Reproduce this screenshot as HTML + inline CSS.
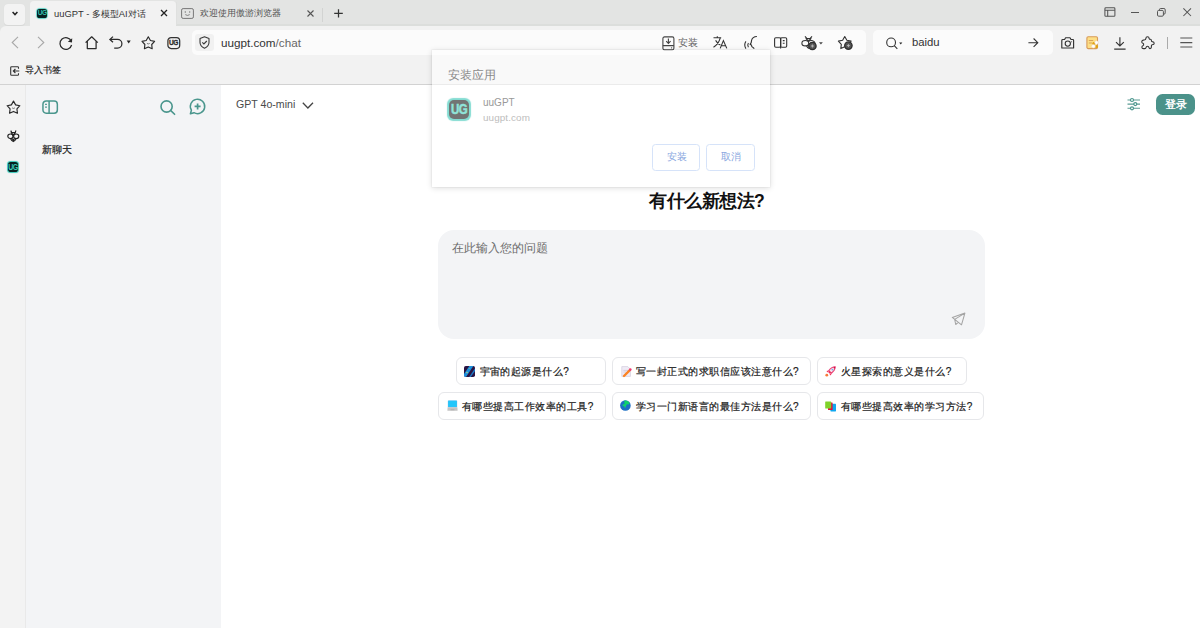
<!DOCTYPE html>
<html><head><meta charset="utf-8">
<style>
*{box-sizing:border-box;margin:0;padding:0}
html,body{width:1200px;height:628px;overflow:hidden;background:#fff;font-family:"Liberation Sans",sans-serif;color:#222}
.a{position:absolute}
svg{position:absolute;overflow:visible}
#tabs{left:0;top:0;width:1200px;height:40px;background:#e3e4e3}
#tool{left:0;top:26px;width:1200px;height:58px;background:#f2f2f2;border-radius:6px 0 0 0}
#bmline{left:0;top:84px;width:1200px;height:1px;background:#d2d2d2}
#strip{left:0;top:85px;width:26px;height:543px;background:#f3f3f3;border-right:1px solid #e9e9e9}
#side{left:26px;top:85px;width:195px;height:543px;background:#f3f4f6}
.t{white-space:nowrap;line-height:1}
.chip{position:absolute;height:28px;border:1px solid #e6e7ea;border-radius:6px;background:#fff;font-size:10px;letter-spacing:0.47px;color:#1a1a1a;-webkit-text-stroke:0.2px #1a1a1a;white-space:nowrap;line-height:27px;padding-left:23px}
.chip i{position:absolute;left:8px;top:8.5px;width:11px;height:11px;border-radius:2px}
</style></head><body>
<!-- tab strip -->
<div id="tabs" class="a"></div>
<div class="a" style="left:4px;top:3.5px;width:21px;height:21px;background:#f3f3f3;border-radius:4px;box-shadow:0 0.5px 1px rgba(0,0,0,0.06)"></div>
<svg style="left:12px;top:11px" width="6" height="5" viewBox="0 0 6 5"><path d="M0.6 1 L3 3.6 L5.4 1" fill="none" stroke="#222" stroke-width="1.5"/></svg>
<div class="a" style="left:30px;top:1px;width:146px;height:26px;background:#f2f2f2;border-radius:4px 4px 0 0"></div>
<!-- UG favicon -->
<div class="a" style="left:37.2px;top:8.7px;width:9.8px;height:9.8px;border-radius:2.6px;background:#08201f;box-shadow:0 0 0.8px 0.7px #3ccbbb"></div>
<div class="a t" style="left:37.2px;top:10.2px;width:9.8px;font-size:6.6px;font-weight:bold;color:#35c2b2;text-align:center;letter-spacing:-0.6px;transform:scaleY(1.15)">UG</div>
<div class="a t" style="left:54px;top:8.5px;font-size:9.4px;color:#333">uuGPT - 多模型AI对话</div>
<svg style="left:160px;top:9px" width="8" height="8" viewBox="0 0 8 8"><path d="M1 1L7 7M7 1L1 7" stroke="#222" stroke-width="1.3"/></svg>
<!-- tab2 -->
<svg style="left:181px;top:7.5px" width="13" height="11" viewBox="0 0 13 11"><rect x="0.6" y="0.6" width="11.8" height="9.8" rx="1.5" fill="none" stroke="#777" stroke-width="1"/><circle cx="4.3" cy="4" r="0.7" fill="#777"/><circle cx="8.7" cy="4" r="0.7" fill="#777"/><path d="M4.3 6.6 Q6.5 8.3 8.7 6.6" fill="none" stroke="#777" stroke-width="0.9"/></svg>
<div class="a t" style="left:200px;top:8.5px;font-size:9px;color:#555">欢迎使用傲游浏览器</div>
<svg style="left:307px;top:9.5px" width="7" height="7" viewBox="0 0 7 7"><path d="M0.5 0.5L6.5 6.5M6.5 0.5L0.5 6.5" stroke="#555" stroke-width="1.1"/></svg>
<div class="a" style="left:322px;top:7.5px;width:1px;height:14px;background:#d2d3d2"></div>
<svg style="left:333.5px;top:8.5px" width="9" height="9" viewBox="0 0 9 9"><path d="M4.5 0.2V8.6M0.2 4.4H8.8" stroke="#333" stroke-width="1.25"/></svg>
<!-- window controls -->
<svg style="left:1103.5px;top:6.5px" width="12" height="10" viewBox="0 0 12 10"><rect x="0.9" y="0.8" width="10" height="8.5" rx="0.9" fill="none" stroke="#555" stroke-width="1.05"/><path d="M0.9 3.3H10.9M3.7 3.3V9.3" stroke="#555" stroke-width="1.05"/></svg>
<div class="a" style="left:1131px;top:12px;width:8px;height:1.2px;background:#555"></div>
<svg style="left:1156.5px;top:7.8px" width="9" height="9" viewBox="0 0 9 9"><rect x="0.5" y="2.4" width="5.9" height="5.8" rx="1.2" fill="none" stroke="#555" stroke-width="1"/><path d="M2.4 2.4V1.8Q2.4 0.5 3.7 0.5H6.9Q8.2 0.5 8.2 1.8V4.9Q8.2 6.2 6.9 6.2H6.4" fill="none" stroke="#555" stroke-width="1"/></svg>
<svg style="left:1183px;top:8px" width="9" height="9" viewBox="0 0 9 9"><path d="M0.4 0.4L8 8M8 0.4L0.4 8" stroke="#555" stroke-width="1.05"/></svg>

<div class="a" style="left:176px;top:24px;width:1024px;height:1.5px;background:#dcdedc"></div>
<div class="a" style="left:176px;top:2px;width:1px;height:23px;background:#dfe0df"></div>
<!-- toolbar -->
<div id="tool" class="a"></div>
<div id="bmline" class="a"></div>

<!-- toolbar icons -->
<svg style="left:11px;top:36px" width="8" height="13" viewBox="0 0 8 13"><path d="M7 0.8L1.2 6.5L7 12.2" fill="none" stroke="#a8a8a8" stroke-width="1.1"/></svg>
<svg style="left:36.5px;top:36px" width="8" height="13" viewBox="0 0 8 13"><path d="M1 0.8L6.8 6.5L1 12.2" fill="none" stroke="#a8a8a8" stroke-width="1.1"/></svg>
<svg style="left:59px;top:35.5px" width="14" height="14" viewBox="0 0 14 14"><path d="M12.3 5.2A5.9 5.9 0 1 0 12.6 9" fill="none" stroke="#2a2a2a" stroke-width="1.25"/><path d="M13.2 2.2L13 6.6L8.8 5.8Z" fill="#2a2a2a"/></svg>
<svg style="left:85px;top:36px" width="14" height="14" viewBox="0 0 14 14"><path d="M0.6 6.6L6.7 0.8L12.8 6.6M2.3 5.1V12.5H11.1V5.1" fill="none" stroke="#2a2a2a" stroke-width="1.25" stroke-linejoin="round"/></svg>
<svg style="left:109px;top:36px" width="23" height="13" viewBox="0 0 23 13"><path d="M4 0.6L0.9 3.4L4 6.2M1 3.4H8.5A4.4 4.4 0 0 1 8.5 12.2H5.2" fill="none" stroke="#2a2a2a" stroke-width="1.25"/><path d="M17.7 4.6H21.7L19.7 7.4Z" fill="#222"/></svg>
<svg style="left:140.5px;top:36px" width="15" height="14" viewBox="0 0 15 14"><path d="M7.30 0.80 L9.42 4.49 L13.58 5.36 L10.72 8.51 L11.18 12.74 L7.30 11.00 L3.42 12.74 L3.88 8.51 L1.02 5.36 L5.18 4.49Z" fill="none" stroke="#2a2a2a" stroke-width="1.15" stroke-linejoin="round"/><path d="M5.9 7.4Q7.3 8.5 8.7 7.4" fill="none" stroke="#555" stroke-width="0.8"/></svg>
<svg style="left:166.5px;top:36.5px" width="14" height="12" viewBox="0 0 14 12"><rect x="0.9" y="0.6" width="11.8" height="10.9" rx="3.2" fill="none" stroke="#333" stroke-width="1.25"/></svg>
<div class="a t" style="left:167.5px;top:40.3px;width:12px;text-align:center;font-size:6.6px;font-weight:bold;color:#2a2a2a;-webkit-text-stroke:0.25px #2a2a2a;letter-spacing:-0.5px;transform:scaleY(1.15)">UG</div>
<!-- address bar -->
<div class="a" style="left:192px;top:30px;width:674px;height:25px;background:#fbfbfb;border-radius:5px"></div>
<div class="a" style="left:195px;top:34px;width:19px;height:17px;background:#f1f1f1;border-radius:3px"></div>
<svg style="left:199px;top:36px" width="11" height="13" viewBox="0 0 11 13"><path d="M5.5 0.7L10 2.5V6.3Q10 10.3 5.5 12.3Q1 10.3 1 6.3V2.5Z" fill="none" stroke="#3a3a3a" stroke-width="1.1" stroke-linejoin="round"/><path d="M3.3 6.4L4.9 8L7.8 5" fill="none" stroke="#3a3a3a" stroke-width="1.1"/></svg>
<div class="a t" style="left:221px;top:37px;font-size:11.7px;color:#333">uugpt.com<span style="color:#666">/chat</span></div>
<svg style="left:661.5px;top:35.5px" width="13" height="15" viewBox="0 0 13 15"><rect x="0.9" y="0.9" width="11" height="13" rx="1.6" fill="none" stroke="#444" stroke-width="1.1"/><path d="M0.9 9.6H11.9M6.4 2.6V7.3M4.2 5.2L6.4 7.4L8.6 5.2" fill="none" stroke="#444" stroke-width="1.1"/><circle cx="9.6" cy="11.8" r="0.6" fill="#444"/></svg>
<div class="a t" style="left:678px;top:38px;font-size:9.8px;color:#666">安装</div>
<svg style="left:713px;top:36px" width="15" height="13" viewBox="0 0 15 13"><path d="M0.5 1.8H8.2M4.3 0.3V1.8M7.3 1.8Q5.5 8 0.5 11.2M2.6 4.4Q4.6 7.8 7.4 9M7.2 12.4L10.4 4.6L13.8 12.4M8.4 9.7H12.6" fill="none" stroke="#333" stroke-width="1.1"/></svg>
<svg style="left:740px;top:33px" width="52" height="19" viewBox="0 0 52 19"><g fill="none" stroke="#333" stroke-width="1.1" stroke-linejoin="round"><path d="M16.9 3.5Q12.4 3.5 11.5 7.6L11.2 9.6L10.1 11.4L11.5 12.1Q11.4 14.3 13 14.5L14.3 15.6"/><path d="M5.9 8.4Q3.6 11.9 5.9 15.6M8.4 10Q7.1 12 8.4 14.2"/><rect x="34.6" y="4.8" width="6" height="9.5" rx="1.2"/><rect x="40.6" y="4.8" width="6.1" height="9.5" rx="1.2"/><path d="M40.6 4.8V15.6M42.8 7.6H44.6M42.8 10.2H44.6"/></g></svg>
<svg style="left:796px;top:33px" width="60" height="19" viewBox="0 0 60 19"><path d="M9 3.3L11 5.6M16 3.3L14 5.6M10 5.6H15L12.5 8.4Z" fill="none" stroke="#333" stroke-width="1.1" stroke-linejoin="round"/><ellipse cx="9.3" cy="10.2" rx="3.4" ry="2.7" fill="none" stroke="#333" stroke-width="1.1"/><path d="M12.6 8.2Q15.5 6.6 18.2 8.6Q19.4 9.8 18.8 11" fill="none" stroke="#333" stroke-width="1.1"/><path d="M10.5 12.8Q11.5 15 13 15.5" fill="none" stroke="#333" stroke-width="1.1"/><circle cx="16.4" cy="13" r="3.7" fill="#555" stroke="#2e2e2e" stroke-width="1.3"/><path d="M14.9 13H17.9M16.4 11.5V14.5" stroke="#bbb" stroke-width="0.9"/><path d="M23 9.2H26.8L24.9 11.6Z" fill="#444"/>
<path d="M48.75 3.50 L50.87 7.29 L55.12 8.13 L52.17 11.31 L52.69 15.62 L48.75 13.80 L44.81 15.62 L45.33 11.31 L42.38 8.13 L46.63 7.29Z" fill="none" stroke="#333" stroke-width="1.1" stroke-linejoin="round"/><circle cx="52.4" cy="12.6" r="3.7" fill="#555" stroke="#2e2e2e" stroke-width="1.3"/><path d="M50.9 12.6H53.9M52.4 11.1V14.1" stroke="#bbb" stroke-width="0.9"/></svg>
<!-- search box -->
<div class="a" style="left:873px;top:30px;width:180px;height:25px;background:#fbfbfb;border-radius:5px"></div>
<svg style="left:885.5px;top:37px" width="17" height="13" viewBox="0 0 17 13"><circle cx="5.1" cy="5.4" r="4.4" fill="none" stroke="#333" stroke-width="1.1"/><path d="M8.3 8.6L11.3 11.8" stroke="#333" stroke-width="1.1"/><path d="M13.2 5.5H16.3L14.75 7.5Z" fill="#222"/></svg>
<div class="a t" style="left:912px;top:37px;font-size:11.3px;color:#333">baidu</div>
<svg style="left:1028px;top:38px" width="11" height="10" viewBox="0 0 11 10"><path d="M0.4 4.7H9.8M5.6 0.5L9.8 4.7L5.6 8.9" fill="none" stroke="#333" stroke-width="1.1"/></svg>
<svg style="left:1060.5px;top:36.5px" width="14" height="12" viewBox="0 0 14 12"><path d="M0.8 3.4Q0.8 2.5 1.8 2.5H3.6L4.6 0.7H9L10 2.5H11.8Q12.6 2.5 12.6 3.4V11H0.8Z" fill="none" stroke="#333" stroke-width="1.15" stroke-linejoin="round"/><circle cx="6.8" cy="6.6" r="2.6" fill="none" stroke="#333" stroke-width="1.1"/><circle cx="10.6" cy="4.8" r="0.5" fill="#333"/></svg>
<svg style="left:1086px;top:36px" width="14" height="14" viewBox="0 0 14 14"><rect x="0.9" y="0.8" width="10.6" height="11.8" rx="1.3" fill="#fddf86" stroke="#d79a5a" stroke-width="1.1"/><path d="M2.8 4.5H7.2M2.8 7H6.2" stroke="#d9a35a" stroke-width="1"/><circle cx="7.8" cy="7.6" r="1.5" fill="#e0a010"/><circle cx="10.5" cy="10.4" r="1.5" fill="#e0a010"/><circle cx="10.5" cy="6.6" r="1.8" fill="#fff" stroke="#e8d0c0" stroke-width="0.5"/><circle cx="7.4" cy="10.2" r="1.8" fill="#fff" stroke="#e8d0c0" stroke-width="0.5"/></svg>
<svg style="left:1113.5px;top:36.5px" width="12" height="13" viewBox="0 0 12 13"><path d="M5.9 0.2V9M2 5.2L5.9 9L9.8 5.2M0.2 12.1H11.6" fill="none" stroke="#333" stroke-width="1.15"/></svg>
<svg style="left:1140.5px;top:36px" width="14" height="14" viewBox="0 0 14 14"><path d="M4.8 2.6Q5 0.7 6.5 0.7Q8 0.7 8.2 2.6Q8.3 3.3 9.4 3.3Q10.4 3.3 10.4 4.4Q10.4 5.5 11.2 5.6Q13.2 5.8 13.2 7.2Q13.2 8.6 11.2 8.8Q10.4 8.9 10.4 9.8V11Q10.4 12.6 9 12.6Q8.2 12.6 8 11.6Q7.7 10.2 6.5 10.2Q5.3 10.2 5 11.6Q4.8 12.6 3.8 12.6H2.5Q0.9 12.6 0.9 11.2Q0.9 10.2 1.8 9.8Q3 9.2 2.6 8Q2.3 7.2 1.4 7Q0.7 6.7 0.8 5.6Q0.9 4.4 2.2 4.1Q3.1 3.9 3.8 3.7Q4.7 3.4 4.8 2.6Z" fill="none" stroke="#333" stroke-width="1.1" stroke-linejoin="round"/></svg>
<div class="a" style="left:1166.5px;top:37px;width:1px;height:11.5px;background:#aaa"></div>
<svg style="left:1179.5px;top:37px" width="13" height="11" viewBox="0 0 13 11"><path d="M0.3 1H12.3M0.3 5.7H12.3M0.3 10H12.3" stroke="#555" stroke-width="1.2"/></svg>
<!-- bookmark bar -->
<svg style="left:9.5px;top:65.5px" width="11" height="10" viewBox="0 0 11 10"><path d="M8.5 2.8V1.6Q8.5 0.7 7.6 0.7H1.6Q0.7 0.7 0.7 1.6V8.4Q0.7 9.3 1.6 9.3H7.6Q8.5 9.3 8.5 8.4V7.2M9.3 5H3.5M5.4 3L3.3 5L5.4 7" fill="none" stroke="#333" stroke-width="1.1"/></svg>
<div class="a t" style="left:25px;top:66px;font-size:9.3px;color:#1a1a1a;-webkit-text-stroke:0.15px #1a1a1a">导入书签</div>

<!-- page -->
<div id="strip" class="a"></div>
<div id="side" class="a"></div>
<svg style="left:5.5px;top:99.5px" width="15" height="15" viewBox="0 0 15 15"><path d="M7.50 1.10 L9.62 4.89 L13.87 5.73 L10.92 8.91 L11.44 13.22 L7.50 11.40 L3.56 13.22 L4.08 8.91 L1.13 5.73 L5.38 4.89Z" fill="none" stroke="#2a2a2a" stroke-width="1.15" stroke-linejoin="round"/><path d="M6.1 7.9Q7.5 9 8.9 7.9" fill="none" stroke="#555" stroke-width="0.8"/></svg>
<svg style="left:6.5px;top:130px" width="13" height="13" viewBox="0 0 13 13"><g fill="none" stroke="#222" stroke-width="1.15" stroke-linejoin="round"><path d="M3.7 0.6L4.6 2.1M9 0.6L8.3 2.1M4.2 2.6H8.4L6.3 5.4Z"/><ellipse cx="3.4" cy="6.3" rx="2.6" ry="2.3"/><ellipse cx="9.2" cy="6.3" rx="2.6" ry="2.3"/><path d="M3.6 8.6Q4.3 10.6 6.3 11.6Q8.3 10.6 9 8.6M5.2 8.6L6.3 10.2L7.4 8.6"/></g></svg>
<div class="a" style="left:7.6px;top:161.6px;width:10.6px;height:10.2px;border-radius:2.8px;background:#062020;box-shadow:0 0 0.8px 0.7px #38c8b8"></div>
<div class="a t" style="left:7.6px;top:163px;width:10.6px;font-size:7px;font-weight:bold;color:#3cc8b8;text-align:center;letter-spacing:-0.6px;transform:scaleY(1.2)">UG</div>
<!-- sidebar -->
<svg style="left:42px;top:99.9px" width="17" height="15" viewBox="0 0 17 15"><rect x="0.95" y="0.95" width="14.4" height="12.3" rx="3.2" fill="none" stroke="#4a968d" stroke-width="1.5"/><path d="M7.1 0.95V13.25" stroke="#4a968d" stroke-width="1.5"/><path d="M3.1 4.4H4.9M3.1 7.2H4.9" stroke="#4a968d" stroke-width="1.2"/></svg>
<svg style="left:159.5px;top:100px" width="16" height="15" viewBox="0 0 16 15"><circle cx="6.6" cy="6.5" r="5.6" fill="none" stroke="#4a968d" stroke-width="1.6"/><path d="M10.8 10.6L14.6 14.3" stroke="#4a968d" stroke-width="1.6" stroke-linecap="round"/></svg>
<svg style="left:189px;top:97.9px" width="17" height="17" viewBox="0 0 17 17"><path d="M1.4 15.8L2.4 12.2A7.2 7.2 0 1 1 5 14.7Z" fill="none" stroke="#4a968d" stroke-width="1.5" stroke-linejoin="round"/><path d="M5.6 8.4H11.6M8.6 5.4V11.4" stroke="#4a968d" stroke-width="1.7"/></svg>
<div class="a t" style="left:41.5px;top:144.5px;font-size:10px;letter-spacing:0.4px;color:#1a1a1a;-webkit-text-stroke:0.2px #1a1a1a">新聊天</div>
<!-- main header -->
<div class="a t" style="left:236px;top:99px;font-size:10.6px;color:#4a4a4a">GPT 4o-mini</div>
<svg style="left:301.5px;top:101.5px" width="12" height="7" viewBox="0 0 12 7"><path d="M0.8 0.8L5.9 6L11 0.8" fill="none" stroke="#444" stroke-width="1.3"/></svg>
<svg style="left:1126.5px;top:97px" width="14" height="14" viewBox="0 0 14 14"><path d="M0.5 3H13M0.5 7.1H13M0.5 11.3H13" stroke="#5a9b93" stroke-width="1.1"/><circle cx="5" cy="3" r="1.5" fill="#fff" stroke="#4a968d" stroke-width="1.2"/><circle cx="8.3" cy="7.1" r="1.5" fill="#fff" stroke="#4a968d" stroke-width="1.2"/><circle cx="5" cy="11.3" r="1.5" fill="#fff" stroke="#4a968d" stroke-width="1.2"/></svg>
<div class="a" style="left:1155.5px;top:93.5px;width:39px;height:21.5px;border-radius:6.5px;background:#4b928a"></div>
<div class="a t" style="left:1164.5px;top:99px;font-size:10.6px;font-weight:bold;color:#fff">登录</div>
<!-- heading -->
<div class="a t" style="left:649px;top:192.5px;font-size:17.6px;letter-spacing:-0.5px;font-weight:bold;color:#111">有什么新想法?</div>
<!-- input -->
<div class="a" style="left:438px;top:230px;width:547px;height:109px;border-radius:16px;background:#f3f4f6"></div>
<div class="a t" style="left:452px;top:242px;font-size:12px;color:#6b6b6b">在此输入您的问题</div>
<svg style="left:951px;top:312px" width="15" height="14" viewBox="0 0 15 14"><path d="M1.3 5.4L13.9 1.1L10.5 12.8L3.7 7.4ZM13.9 1.1L3.7 7.4L4.7 12.5L7.2 10.4" fill="none" stroke="#a4a4a4" stroke-width="1.05" stroke-linejoin="round"/></svg>
<!-- chips -->
<div class="chip" style="left:455.5px;top:357px;width:150px">宇宙的起源是什么?</div>
<div class="chip" style="left:612px;top:357px;width:198.5px">写一封正式的求职信应该注意什么?</div>
<div class="chip" style="left:817px;top:357px;width:149.5px">火星探索的意义是什么?</div>
<div class="chip" style="left:438px;top:391.5px;width:167.5px">有哪些提高工作效率的工具?</div>
<div class="chip" style="left:612px;top:391.5px;width:198.5px">学习一门新语言的最佳方法是什么?</div>
<div class="chip" style="left:817px;top:391.5px;width:167px">有哪些提高效率的学习方法?</div>

<svg style="left:464px;top:366px" width="11" height="11" viewBox="0 0 11 11"><defs><clipPath id="c1"><rect x="0" y="0" width="11" height="11" rx="1.8"/></clipPath></defs><g clip-path="url(#c1)"><rect width="11" height="11" fill="#2b1442"/><path d="M-2 11L6 -1L10 -1L2 11Z" fill="#1c8fdc"/><path d="M4.5 12L11.5 1.5L12.5 3L6 12Z" fill="#1a78c8"/><circle cx="3" cy="6.5" r="0.7" fill="#c8e070"/><circle cx="5.2" cy="2.6" r="0.5" fill="#a0d080"/></g></svg>
<svg style="left:621px;top:366px" width="11" height="11" viewBox="0 0 11 11"><path d="M0.8 0.6H6.8L9.4 3.2V10.4H0.8Z" fill="#efebf6" stroke="#d6d0e0" stroke-width="0.8"/><path d="M2.4 4.4H7.4M2.4 6H5" stroke="#c8c2d4" stroke-width="0.7"/><path d="M3 10L8.6 4.4" stroke="#fb8424" stroke-width="2.4" stroke-linecap="round"/><circle cx="9.3" cy="3.6" r="1.3" fill="#f03a70"/></svg>
<svg style="left:825px;top:365.5px" width="11" height="11" viewBox="0 0 11 11"><path d="M10.2 0.8Q6.6 0.9 3.8 4.6L6.4 7.2Q10.1 4.4 10.2 0.8Z" fill="#fbe4ee" stroke="#e84a7a" stroke-width="1.1"/><path d="M3.6 4.5L1.4 5.1L2.8 6.6ZM6.5 7.4L5.9 9.6L4.4 8.2Z" fill="#f03060"/><path d="M3.6 5.4L5.6 7.4" stroke="#f0305a" stroke-width="1.6"/><circle cx="7.4" cy="3.6" r="0.9" fill="#6ab8f0"/><circle cx="9.4" cy="1.6" r="0.9" fill="#d0104a"/><circle cx="1.8" cy="9.2" r="1.4" fill="#f87a3a"/></svg>
<svg style="left:447px;top:400px" width="11" height="11" viewBox="0 0 11 11"><rect x="1" y="0.6" width="9" height="6.6" rx="0.6" fill="#22c6fa" stroke="#7ab0e8" stroke-width="0.3"/><path d="M0.6 7.2H10.4L10.6 10.8H0.4Z" fill="#c4c4c4"/><rect x="3.6" y="9.4" width="3.8" height="0.8" fill="#a8a8a8"/></svg>
<svg style="left:620px;top:400px" width="11" height="11" viewBox="0 0 11 11"><circle cx="5.4" cy="5.5" r="5.3" fill="#1d6fc4"/><path d="M4.2 0.6Q7.6 0.2 9.8 3L8.6 4.6L7 4.2L6.2 5.6L5 8.6L4.4 6.6L2.4 5.8L2.8 4.4L4.6 4Z" fill="#10d36a"/></svg>
<svg style="left:825px;top:400.5px" width="11" height="11" viewBox="0 0 11 11"><rect x="5.4" y="2.8" width="5.6" height="7.6" rx="0.6" fill="#0fa8f0"/><rect x="3" y="1.4" width="4.6" height="7.6" rx="0.5" fill="#e0103e"/><rect x="0.2" y="0.4" width="6" height="7" rx="0.5" fill="#80d22a"/></svg>
<!-- popup -->
<div class="a" style="left:431.5px;top:49.5px;width:338px;height:137.5px;background:rgba(255,255,255,0.55);box-shadow:0 0 0 0.6px rgba(0,0,0,0.05),0 0.5px 6px rgba(0,0,0,0.14)"></div>
<div class="a t" style="left:448px;top:68.5px;font-size:12px;color:#8a8a8a">安装应用</div>
<div class="a" style="left:448.6px;top:99.6px;width:20.8px;height:19.8px;border-radius:5px;background:#727474;box-shadow:0 0 1px 1.1px #84dcd2"></div>
<div class="a t" style="left:448.6px;top:104px;width:20.8px;text-align:center;font-size:11.5px;font-weight:bold;color:#90e4d9;-webkit-text-stroke:0.4px #90e4d9;letter-spacing:-0.6px;transform:scaleY(1.22)">UG</div>
<div class="a t" style="left:483px;top:97.5px;font-size:10px;color:#999">uuGPT</div>
<div class="a t" style="left:483px;top:112.5px;font-size:9.9px;letter-spacing:0.1px;color:#bdbdbd">uugpt.com</div>
<div class="a" style="left:652px;top:143.5px;width:47.5px;height:27.5px;border:1px solid #d6e3f9;border-radius:3.5px"></div>
<div class="a t" style="left:666.5px;top:152px;font-size:9.8px;color:#8aa8e0">安装</div>
<div class="a" style="left:706px;top:143.5px;width:48.5px;height:27.5px;border:1px solid #d6e3f9;border-radius:3.5px"></div>
<div class="a t" style="left:720.5px;top:152px;font-size:9.8px;color:#8aa8e0">取消</div>
</body></html>
